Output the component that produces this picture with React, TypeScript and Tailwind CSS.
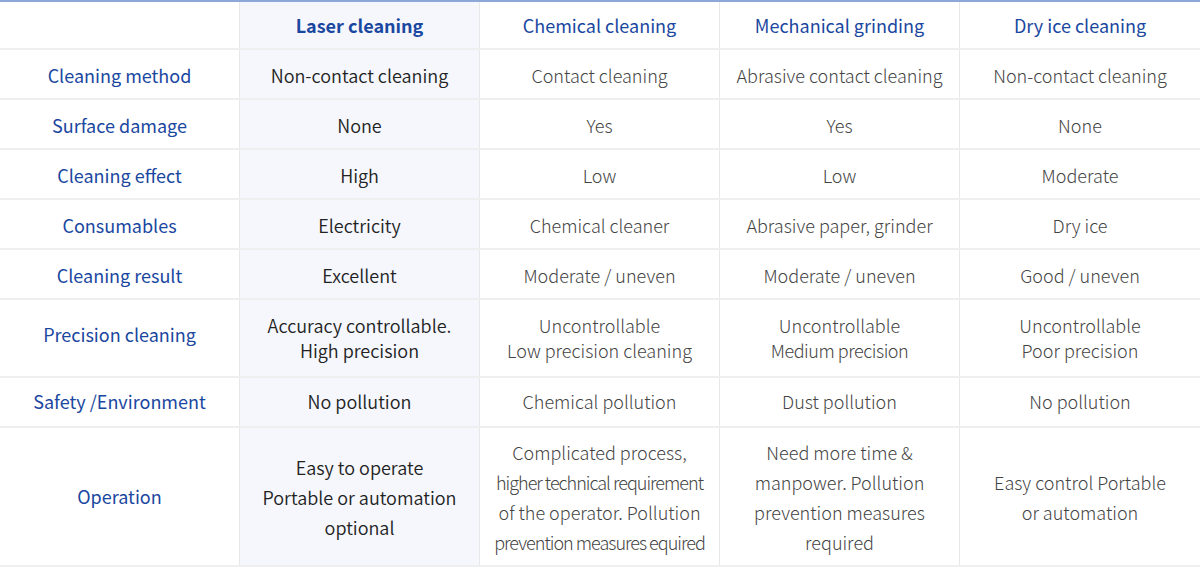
import React from "react";

const cols = ["Laser cleaning", "Chemical cleaning", "Mechanical grinding", "Dry ice cleaning"];

type Row = { label: string; h: string; pad: string; labelPad: string; cells: string[][] };

const rows: Row[] = [
  { label: "Cleaning method", h: "h-[50px]", pad: "pt-[2px]", labelPad: "pt-[2px]", cells: [["Non-contact cleaning"], ["Contact cleaning"], ["Abrasive contact cleaning"], ["Non-contact cleaning"]] },
  { label: "Surface damage", h: "h-[50px]", pad: "pt-[2px]", labelPad: "pt-[2px]", cells: [["None"], ["Yes"], ["Yes"], ["None"]] },
  { label: "Cleaning effect", h: "h-[50px]", pad: "pt-[2px]", labelPad: "pt-[2px]", cells: [["High"], ["Low"], ["Low"], ["Moderate"]] },
  { label: "Consumables", h: "h-[50px]", pad: "pt-[2px]", labelPad: "pt-[2px]", cells: [["Electricity"], ["Chemical cleaner"], ["Abrasive paper, grinder"], ["Dry ice"]] },
  { label: "Cleaning result", h: "h-[50px]", pad: "pt-[2px]", labelPad: "pt-[2px]", cells: [["Excellent"], ["Moderate / uneven"], ["Moderate / uneven"], ["Good / uneven"]] },
  {
    label: "Precision cleaning",
    h: "h-[78px]",
    pad: "",
    labelPad: "pb-[8px]",
    cells: [
      ["Accuracy controllable.", "High precision"],
      ["Uncontrollable", "Low precision cleaning"],
      ["Uncontrollable", "Medium precision"],
      ["Uncontrollable", "Poor precision"],
    ],
  },
  { label: "Safety /Environment", h: "h-[50px]", pad: "pb-[2px]", labelPad: "pb-[2px]", cells: [["No pollution"], ["Chemical pollution"], ["Dust pollution"], ["No pollution"]] },
  {
    label: "Operation",
    h: "h-[139px]",
    pad: "",
    labelPad: "pb-[1px]",
    cells: [
      ["Easy to operate", "Portable or automation", "optional"],
      ["Complicated process,", "higher technical requirement", "of the operator. Pollution", "prevention measures equired"],
      ["Need more time &", "manpower. Pollution", "prevention measures", "required"],
      ["Easy control Portable", "or automation"],
    ],
  },
];

const tight: Record<string, string> = {
  "higher technical requirement": "tracking-[-0.055em]",
  "prevention measures equired": "tracking-[-0.055em]",
  "Medium precision": "tracking-[-0.025em]",
};

export default function App() {
  return (
    <div
      className="w-[1200px] h-[570px] bg-white overflow-hidden"
      style={{ fontFamily: '"Noto Sans CJK KR", "Noto Sans", sans-serif' }}
    >
      <div className="border-t-2 border-[#8ca7d8]">
        <div className="grid grid-cols-[240px_240px_240px_240px_240px] h-[48px] border-b-2 border-[#efefef]">
          <div className="border-r border-[#e8e8e8]" />
          {cols.map((c, i) => (
            <div
              key={c}
              className={`flex items-center justify-center text-[18px] text-[#1a47a0] ${
                i === 0 ? "font-bold bg-[#f5f7fc]" : "font-normal"
              } ${i === 3 ? "" : "border-r border-[#e8e8e8]"}`}
            >
              {c}
            </div>
          ))}
        </div>
        {rows.map((r) => (
          <div
            key={r.label}
            className={`grid grid-cols-[240px_240px_240px_240px_240px] ${r.h} border-b-2 border-[#efefef]`}
          >
            <div className={`flex items-center justify-center ${r.labelPad} text-[18px] text-[#1a47a0] border-r border-[#e8e8e8]`}>
              {r.label}
            </div>
            {r.cells.map((lines, i) => (
              <div
                key={i}
                className={`flex flex-col items-center justify-center ${r.pad} text-center text-[18px] ${
                  r.label === "Operation" ? "leading-[30px]" : "leading-[25px]"
                } ${i === 0 ? "bg-[#f5f7fc] text-[#222222] font-[350]" : "text-[#444444] font-light"} ${
                  i === 3 ? "" : "border-r border-[#e8e8e8]"
                }`}
              >
                {lines.map((l) => (
                  <span key={l} className={`whitespace-nowrap ${tight[l] ?? ""}`}>
                    {l}
                  </span>
                ))}
              </div>
            ))}
          </div>
        ))}
      </div>
    </div>
  );
}
